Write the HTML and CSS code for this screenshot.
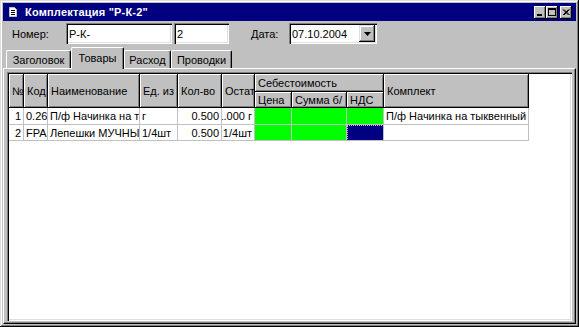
FILE: index.html
```html
<!DOCTYPE html>
<html lang="ru">
  <head>
    <meta charset="UTF-8" />
    <title>Комплектация</title>
    <link rel="stylesheet" href="styles.css">
  </head>
  <body>
    <div class="window">
      <!-- Заголовок окна -->
      <div class="titlebar">
        <svg class="title-icon" width="8" height="10" viewBox="0 0 8 10">
          <path d="M0.5 0.5 H5.5 L7.5 2.5 V9.5 H0.5 Z" fill="#fff" stroke="#c0c0c0" stroke-width="1" />
          <path d="M2 3.5 H6 M2 5.5 H6 M2 7.5 H6" stroke="#000" stroke-width="1" />
        </svg>
        <span class="title-text">Комплектация "Р-К-2"</span>
        <div class="title-buttons">
          <div class="tbtn">
            <svg width="12" height="13" viewBox="0 0 12 13"><rect x="3" y="8" width="5" height="2" fill="#000" /></svg>
          </div>
          <div class="tbtn">
            <svg width="12" height="13" viewBox="0 0 12 13"><rect x="2.5" y="2.5" width="7" height="7" fill="none" stroke="#000" /><rect x="2" y="2" width="8" height="2" fill="#000" /></svg>
          </div>
          <div class="tbtn tbtn-close">
            <svg width="12" height="13" viewBox="0 0 12 13"><path d="M3 3.5 L8.5 9 M4 3.5 L9.5 9 M8.5 3.5 L3 9 M9.5 3.5 L4 9" stroke="#000" stroke-width="1" /></svg>
          </div>
        </div>
      </div>

      <!-- Номер / дата -->
      <div class="fields">
        <span class="lbl lbl-num">Номер:</span>
        <div class="field f-num">Р-К-</div>
        <div class="field f-num2">2</div>
        <span class="lbl lbl-date">Дата:</span>
        <div class="field combo">
          <span class="combo-text">07.10.2004</span>
          <span class="drop">
            <svg width="7" height="4" viewBox="0 0 7 4"><path d="M0 0 H7 L3.5 4 Z" fill="#000" /></svg>
          </span>
        </div>
      </div>

      <!-- Вкладки -->
      <div class="tabs">
        <div class="tab tab-1">Заголовок</div>
        <div class="tab tab-2 active">Товары</div>
        <div class="tab tab-3">Расход</div>
        <div class="tab tab-4">Проводки</div>
      </div>

      <div class="page">
        <div class="grid">
          <div class="table">
            <div class="h h2">№</div>
            <div class="h h2">Код</div>
            <div class="h h2">Наименование</div>
            <div class="h h2">Ед. из</div>
            <div class="h h2">Кол-во</div>
            <div class="h h2">Остат</div>
            <div class="h group">Себестоимость</div>
            <div class="h h2">Комплект</div>
            <div class="h">Цена</div>
            <div class="h">Сумма б/</div>
            <div class="h">НДС</div>

            <div class="c r">1</div>
            <div class="c">0.26</div>
            <div class="c">П/ф Начинка на т</div>
            <div class="c">г</div>
            <div class="c r">0.500</div>
            <div class="c r">1.000 г</div>
            <div class="c green"></div>
            <div class="c green"></div>
            <div class="c green"></div>
            <div class="c">П/ф Начинка на тыквенный</div>

            <div class="c r">2</div>
            <div class="c">FPA</div>
            <div class="c">Лепешки МУЧНЫЕ</div>
            <div class="c">1/4шт</div>
            <div class="c r">0.500</div>
            <div class="c r">1/4шт</div>
            <div class="c green"></div>
            <div class="c green"></div>
            <div class="c sel"></div>
            <div class="c"></div>
          </div>
        </div>
      </div>
    </div>
  </body>
</html>
```

FILE: styles.css
```css
* {
  box-sizing: border-box;
  margin: 0;
  padding: 0;
}

body {
  background: #c0c0c0;
  font-family: "Liberation Sans", Arial, sans-serif;
  font-size: 11px;
  color: #000;
}

.window {
  width: 579px;
  height: 327px;
  padding: 3px;
  background: #c0c0c0;
  display: flex;
  flex-direction: column;
  box-shadow: inset -1px -1px #000, inset 1px 1px #dfdfdf,
    inset -2px -2px #808080, inset 2px 2px #fff;
}

/* Заголовок окна */
.titlebar {
  height: 18px;
  flex: none;
  background: #000080;
  color: #fff;
  display: flex;
  align-items: center;
  padding-left: 6px;
  padding-right: 4px;
}

.title-icon {
  margin-right: 8px;
}

.title-text {
  font-weight: 700;
  font-size: 11px;
  letter-spacing: 0.2px;
}

.title-buttons {
  margin-left: auto;
  display: flex;
}

.tbtn {
  width: 12px;
  height: 13px;
  background: #c0c0c0;
  box-shadow: inset -1px -1px #000, inset 1px 1px #fff, inset -2px -2px #808080;
}

.tbtn svg {
  display: block;
}

.tbtn-close {
  margin-left: 2px;
}

/* Поля */
.fields {
  flex: none;
  height: 21px;
  margin-top: 2px;
  display: flex;
  align-items: center;
  padding-left: 9px;
}

.lbl-num {
  width: 54px;
}

.lbl-date {
  width: 38px;
  margin-left: 22px;
}

.field {
  height: 21px;
  background: #fff;
  padding-left: 3px;
  display: flex;
  align-items: center;
  box-shadow: inset 1px 1px #808080, inset 2px 2px #000,
    inset -1px -1px #fff, inset -2px -2px #dfdfdf;
}

.f-num {
  width: 106px;
  margin-right: 2px;
}

.f-num2 {
  width: 55px;
}

.combo {
  width: 88px;
  padding-right: 2px;
}

.combo-text {
  flex: 1;
}

.drop {
  width: 16px;
  height: 17px;
  background: #c0c0c0;
  display: flex;
  align-items: center;
  justify-content: center;
  box-shadow: inset -1px -1px #000, inset 1px 1px #dfdfdf,
    inset -2px -2px #808080, inset 2px 2px #fff;
}

/* Вкладки */
.tabs {
  flex: none;
  height: 24px;
  display: flex;
  align-items: flex-end;
  padding-left: 3px;
}

.tab {
  height: 18px;
  border-top: 1px solid #fff;
  border-left: 1px solid #fff;
  border-right: 1px solid #000;
  border-radius: 2px 2px 0 0;
  box-shadow: inset -1px 0 #808080;
  display: flex;
  align-items: center;
  justify-content: center;
  background: #c0c0c0;
}

.tab-1 { width: 65px; }
.tab-2 { width: 53px; }
.tab-3 { width: 47px; }
.tab-4 { width: 61px; }

.tab.active {
  height: 22px;
  margin-bottom: -1px;
  padding-bottom: 2px;
  position: relative;
  z-index: 1;
}

.page {
  flex: 1;
  display: flex;
  border-top: 1px solid #fff;
  border-left: 1px solid #fff;
  border-right: 1px solid #000;
  border-bottom: 1px solid #000;
  box-shadow: inset -1px -1px #808080;
  padding: 3px 3px 2px 3px;
}

.grid {
  flex: 1;
  background: #fff;
  padding: 2px;
  overflow: hidden;
  box-shadow: inset 1px 1px #808080, inset 2px 2px #000,
    inset -1px -1px #fff, inset -2px -2px #dfdfdf;
}

/* Таблица товаров */
.table {
  display: grid;
  grid-template-columns: 15px 24px 92px 38px 44px 33px 37px 55px 37px 145px;
  grid-template-rows: 18px 16px 17px 16px;
}

.h,
.c {
  display: flex;
  align-items: center;
  overflow: hidden;
  white-space: nowrap;
}

.h {
  background: #c0c0c0;
  padding-left: 3px;
  border-right: 1px solid #000;
  border-bottom: 1px solid #000;
  box-shadow: inset 1px 1px #fff, inset -1px -1px #808080;
}

.h2 {
  grid-row: span 2;
}

.group {
  grid-column: span 3;
}

.c {
  padding: 0 2px;
  border-right: 1px solid #c0c0c0;
  border-bottom: 1px solid #c0c0c0;
}

.r {
  justify-content: flex-end;
}

.green {
  background: #00ff00;
}

.sel {
  background: #000080;
  outline: 1px dotted #c0c0c0;
  outline-offset: -1px;
}
```
